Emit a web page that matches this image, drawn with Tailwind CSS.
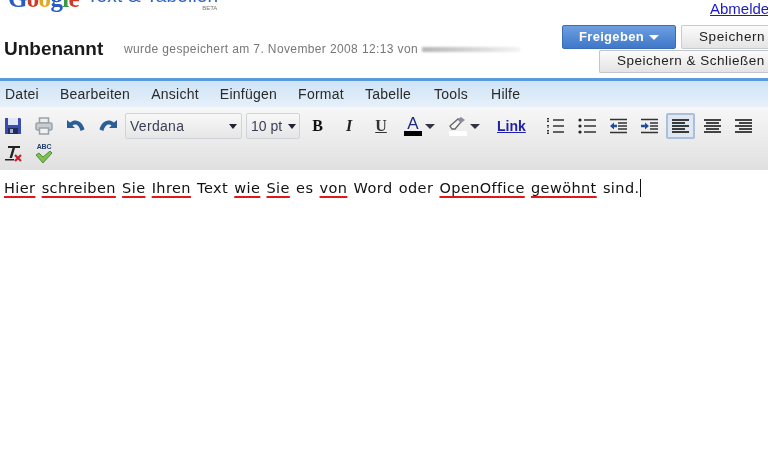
<!DOCTYPE html>
<html lang="de">
<head>
<meta charset="UTF-8" />
<title>Unbenannt - Google Text &amp; Tabellen</title>
<script src="https://cdn.jsdelivr.net/npm/@tailwindcss/browser@4"></script>
</head>
<body class="bg-white w-[768px] h-[460px] overflow-hidden font-['Liberation_Sans',sans-serif]">
<div class="blur-[0.4px]">

  <!-- Header -->
  <div class="h-[78px] flex flex-col">
    <div class="h-[25px] flex items-start overflow-hidden">
      <div class="flex items-end h-[11px] ml-[8px]">
        <span class="font-['Liberation_Serif',serif] text-[25px] leading-[25px] font-bold whitespace-nowrap tracking-[-0.7px]"><span class="text-[#2a5bc4]">G</span><span class="text-[#cf3a28]">o</span><span class="text-[#e0a820]">o</span><span class="text-[#2a5bc4]">g</span><span class="text-[#3c9a46]">l</span><span class="text-[#cf3a28]">e</span></span>
        <div class="ml-[8px] flex flex-col items-end">
          <span class="text-[19px] leading-[19px] text-[#2f62c0] whitespace-nowrap -mt-[9px] tracking-[0.2px]">Text &amp; Tabellen</span>
          <span class="text-[6px] leading-[6px] text-[#777] mr-[1px]">BETA</span>
        </div>
      </div>
      <a class="ml-auto mt-[1px] text-[15px] leading-[16px] text-[#1a1acc] underline whitespace-nowrap w-[58px] overflow-hidden">Abmelden</a>
    </div>
    <div class="flex">
      <div class="flex items-center h-[48px] pl-[4px]">
        <span class="text-[19px] font-bold text-[#1a1a1a] leading-[22px] w-[120px]">Unbenannt</span>
        <span class="text-[12px] text-[#777] whitespace-nowrap tracking-[0.38px]">wurde gespeichert am 7. November 2008 12:13 von</span>
        <span class="ml-[4px] w-[98px] h-[5px] bg-gradient-to-r from-[#b5b5b5] to-[#f4f4f4] blur-[1px]"></span>
      </div>
      <div class="ml-auto flex flex-col items-end gap-[1px] w-[206px]">
        <div class="flex gap-[5px]">
          <div class="w-[114px] h-[24px] rounded-[2px] border border-[#3a6cb8] bg-gradient-to-b from-[#6d9ee0] to-[#3f78c8] flex items-center justify-center text-white text-[13px] font-bold gap-[5px] tracking-[0.3px]">Freigeben<span class="w-0 h-0 border-x-[5px] border-x-transparent border-t-[5px] border-t-white"></span></div>
          <div class="w-[87px] h-[24px] rounded-l-[2px] border border-r-0 border-[#c8ccd2] bg-gradient-to-b from-[#fbfbfb] to-[#e4e4e4] flex items-center pl-[17px] text-[13.5px] text-[#222] tracking-[0.6px] whitespace-nowrap">Speichern</div>
        </div>
        <div class="w-[169px] h-[23px] rounded-l-[2px] border border-r-0 border-[#c0c6ce] bg-gradient-to-b from-[#fbfbfb] to-[#e4e4e4] flex items-center pl-[17px] text-[13.5px] text-[#222] tracking-[0.5px] whitespace-nowrap">Speichern &amp; Schließen</div>
      </div>
    </div>
  </div>

  <!-- Menu -->
  <div class="h-[3px] bg-[#5a9bdc]"></div>
  <div class="h-[26px] bg-gradient-to-b from-[#cfe3f6] to-[#e6f0fa] flex items-center gap-[21px] pl-[5px] text-[14px] text-[#2a2a2a] tracking-[0.25px]">
    <span>Datei</span><span>Bearbeiten</span><span>Ansicht</span><span>Einfügen</span><span>Format</span><span>Tabelle</span><span class="ml-[2px]">Tools</span><span class="ml-[2px]">Hilfe</span>
  </div>

  <!-- Toolbar -->
  <div class="h-[63px] bg-gradient-to-b from-[#f7f7f7] to-[#e0e0e0] pt-[6px]">
    <div class="h-[26px] flex items-center">
      <!-- save -->
      <svg class="ml-[4px]" width="18" height="18" viewBox="0 0 18 18"><path d="M1 1h15l1 1v15H1z" fill="#3b4cb0"/><rect x="4" y="1" width="10" height="7" fill="#dfe6f5"/><rect x="4" y="11" width="10" height="6" fill="#222a55"/><rect x="6" y="12" width="3" height="4" fill="#9fb0dc"/></svg>
      <!-- print -->
      <svg class="ml-[13px]" width="18" height="18" viewBox="0 0 18 18" fill="none" stroke="#9aa1a8" stroke-width="1.5"><rect x="4.5" y="1" width="9" height="5" fill="#eee"/><rect x="1" y="6" width="16" height="7" rx="1.5" fill="#c7ccd0"/><rect x="4.5" y="11" width="9" height="6" fill="#f2f2f2"/></svg>
      <!-- undo -->
      <svg class="ml-[14px]" width="18" height="14" viewBox="0 0 18 14"><path d="M0 1v8h8L5.500 6.500C8 4.500 12 5.500 13.500 12l4-1.500C16 3 9 -1.500 3 3.500z" fill="#2c5f96"/></svg>
      <!-- redo -->
      <svg class="ml-[14px]" width="18" height="14" viewBox="0 0 18 14"><path d="M18 1v8h-8l2.500-2.500C10 4.500 6 5.500 4.500 12L.5 10.500C2 3 9 -1.500 15 3.500z" fill="#2c5f96"/></svg>
      <!-- font -->
      <div class="ml-[8px] w-[117px] h-[26px] rounded-[2px] border border-[#d0d4da] bg-gradient-to-b from-[#f8f8f8] to-[#e6e6e6] flex items-center pl-[4px] pr-[4px] text-[14px] text-[#3a3f55] tracking-[0.3px]">Verdana<span class="ml-auto w-0 h-0 border-x-[4px] border-x-transparent border-t-[5px] border-t-[#223]"></span></div>
      <div class="ml-[4px] w-[54px] h-[26px] rounded-[2px] border border-[#d0d4da] bg-gradient-to-b from-[#f8f8f8] to-[#e6e6e6] flex items-center pl-[4px] pr-[3px] text-[14px] text-[#3a3f55] whitespace-nowrap">10 pt<span class="ml-auto w-0 h-0 border-x-[4px] border-x-transparent border-t-[5px] border-t-[#223]"></span></div>
      <!-- B I U -->
      <span class="ml-[11px] w-[13px] text-center font-['Liberation_Serif',serif] font-bold text-[16px] text-[#111]">B</span>
      <span class="ml-[19px] w-[12px] text-center font-['Liberation_Serif',serif] font-bold italic text-[16px] text-[#222]">I</span>
      <span class="ml-[20px] w-[12px] text-center font-['Liberation_Serif',serif] font-bold underline text-[16px] text-[#333]">U</span>
      <!-- text colour -->
      <div class="ml-[17px] w-[18px] flex flex-col items-center">
        <span class="text-[17px] leading-[15px] text-[#1d2a80]">A</span>
        <span class="w-[18px] h-[5px] bg-black"></span>
      </div>
      <span class="ml-[3px] w-0 h-0 border-x-[5px] border-x-transparent border-t-[5px] border-t-[#334]"></span>
      <!-- highlight -->
      <div class="ml-[14px] w-[18px] flex flex-col items-center">
        <svg width="18" height="14" viewBox="0 0 18 14"><path d="M1 9 9 2l3 3-6 7H3z" fill="#f4f4f4" stroke="#666" stroke-width="1.300"/><path d="M9 2l3-2 4 3-4 3z" fill="#8a8f99"/></svg>
        <span class="w-[18px] h-[5px] bg-white"></span>
      </div>
      <span class="ml-[3px] w-0 h-0 border-x-[5px] border-x-transparent border-t-[5px] border-t-[#334]"></span>
      <!-- link -->
      <span class="ml-[17px] text-[14px] font-bold text-[#1f1fa8] underline w-[29px]">Link</span>
      <!-- ordered list -->
      <svg class="ml-[20px]" width="18" height="18" viewBox="0 0 18 18" stroke="#333" stroke-width="1.500"><path d="M7 3h11M7 9h11M7 15h11"/><path d="M2 1v5M2 8v3M2 13v4" stroke-width="2" stroke-dasharray="1.500 1"/></svg>
      <!-- bullet list -->
      <svg class="ml-[14px]" width="18" height="18" viewBox="0 0 18 18" stroke="#333" stroke-width="1.500"><path d="M6 3h12M6 9h12M6 15h12"/><circle cx="2" cy="3" r="1.600" fill="#222" stroke="none"/><circle cx="2" cy="9" r="1.600" fill="#222" stroke="none"/><circle cx="2" cy="15" r="1.600" fill="#222" stroke="none"/></svg>
      <!-- outdent -->
      <svg class="ml-[13px]" width="18" height="16" viewBox="0 0 18 16" stroke="#333" stroke-width="1.500"><path d="M1 1.500h17M9 5h9M9 8h9M9 11h9M1 14.500h17"/><path d="M1 8l4-3.500v2.200h3v2.600H5v2.200z" fill="#1f4f9a" stroke="none"/></svg>
      <!-- indent -->
      <svg class="ml-[13px]" width="18" height="16" viewBox="0 0 18 16" stroke="#333" stroke-width="1.500"><path d="M1 1.500h17M10 5h8M10 8h8M10 11h8M1 14.500h17"/><path d="M9 8 5 4.500v2.200H1v2.600h4v2.200z" fill="#1f4f9a" stroke="none"/></svg>
      <!-- align -->
      <div class="ml-[8px] w-[29px] h-[26px] rounded-[2px] border-2 border-[#a9bfdc] bg-[#dfe7f3] flex items-center justify-center">
        <svg width="17" height="14" viewBox="0 0 17 14" stroke="#3a3a3a" stroke-width="2"><path d="M0 1h17M0 4h13M0 7h17M0 10h13M0 13h17"/></svg>
      </div>
      <svg class="ml-[9px]" width="17" height="14" viewBox="0 0 17 14" stroke="#444" stroke-width="2"><path d="M0 1h17M2 4h13M0 7h17M2 10h13M0 13h17"/></svg>
      <svg class="ml-[14px]" width="17" height="14" viewBox="0 0 17 14" stroke="#444" stroke-width="2"><path d="M0 1h17M4 4h13M0 7h17M4 10h13M0 13h17"/></svg>
    </div>
    <div class="h-[26px] mt-[1px] flex items-center">
      <!-- clear formatting -->
      <svg class="ml-[4px]" width="19" height="19" viewBox="0 0 19 19"><path d="M4 2h12v2h-5L8 14H5.500L8.500 4H4z" fill="#222"/><path d="M1 15h9v1.500H1z" fill="#222"/><path d="M11 11l6 6M17 11l-6 6" stroke="#c8202a" stroke-width="2.200"/></svg>
      <!-- spell check -->
      <div class="ml-[12px] w-[18px] h-[20px] flex flex-col items-center">
        <span class="text-[7px] leading-[8px] font-bold text-[#24406e] tracking-[-0.2px]">ABC</span>
        <svg width="18" height="12" viewBox="0 0 18 12"><path d="M1 4l3-2 4 4 7-6 2 2-9 10z" fill="#7fc04e" stroke="#3a7a2c" stroke-width="0.800"/></svg>
      </div>
    </div>
  </div>

  <!-- Document -->
  <div class="pt-[8px] pl-[4px] font-['DejaVu_Sans',sans-serif] text-[14.5px] tracking-[0.4px] [word-spacing:1.2px] leading-[20px] text-[#111] whitespace-nowrap flex items-center">
    <p class="[&>u]:decoration-[#e01818] [&>u]:decoration-[2px] [&>u]:underline-offset-[3px]"><u>Hier</u> <u>schreiben</u> <u>Sie</u> <u>Ihren</u> Text <u>wie</u> <u>Sie</u> es <u>von</u> Word oder <u>OpenOffice</u> <u>gewöhnt</u> sind.</p>
    <span class="w-[1.5px] h-[18px] bg-[#111]"></span>
  </div>
</div>
</body>
</html>
